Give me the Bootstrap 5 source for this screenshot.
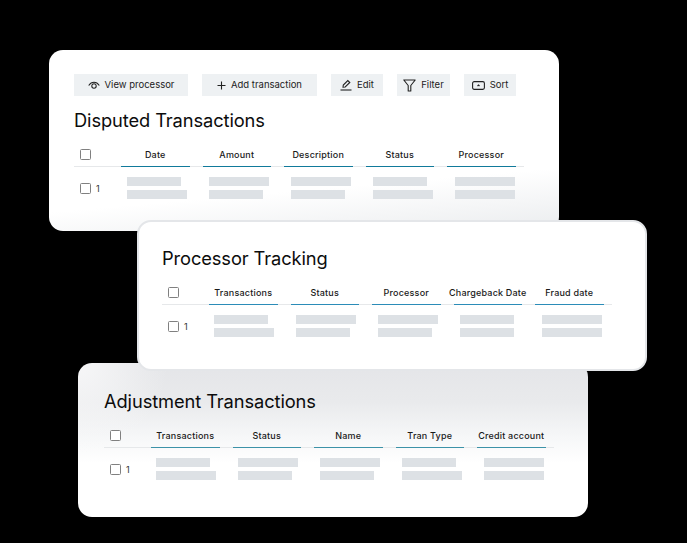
<!DOCTYPE html>
<html lang="en">
<head>
<meta charset="utf-8">
<title>Transactions</title>
<link href="https://cdn.jsdelivr.net/npm/bootstrap@5.3.0/dist/css/bootstrap.min.css" rel="stylesheet">
<style>
html,body{height:100%;margin:0;background:#000;overflow:hidden}
.stage{position:relative;width:687px;height:543px;background:#000;font-family:"Inter","Liberation Sans",sans-serif;color:#111}
.win{position:absolute;width:510px;border-radius:14px;padding-left:25px;padding-right:35px}
.win-a{left:49px;top:50px;height:181px;padding-top:24px;background:linear-gradient(175deg,#fff 0,#fff 72%,#eaecee 100%)}
.win-b{left:137px;top:220px;height:151px;padding-top:24px;background:#fff;border:2px solid #e4e6e9;padding-left:23px;z-index:2}
.win-c{left:78px;top:363px;height:154px;padding-top:26px;padding-left:26px;background:radial-gradient(circle at 0 0,#f7f7f8 0,rgba(247,247,248,0) 90px),linear-gradient(180deg,#e4e5e8 0,#e9eaec 25%,#f6f7f8 48%,#fff 65%);z-index:1}
.tools{gap:14px;height:22px;margin-bottom:12px}
.tool{height:22px;background:#eef1f3;font-size:9.5px;color:#222;gap:5px}
.tool svg{display:block;flex:none}
.tool-label{padding-top:1px}
.win-title{font-size:18.3px;line-height:24px;font-weight:400;margin:0 0 10px;color:#0c0c0c;letter-spacing:-.1px}
.head-row{height:25px;border-bottom:1px solid #e6e8ea;width:450px}
.box{width:11px;height:11px;border:1.5px solid #808080;border-radius:1.5px;flex:none;background:#fff}
.head-box{margin-top:7px}
.col-first{width:47px;padding-left:6px;flex:none}
.heads{gap:13px}
.head-cell{width:68.5px;height:25px;margin-bottom:-1px;border-bottom:1.5px solid #117a9b;font-size:9px;font-weight:500;letter-spacing:.2px;color:#1a1a1a;padding-bottom:5px;white-space:nowrap}
.win-b .head-cell{border-bottom-color:#2b8cb8}
.win-c .head-cell{border-bottom-color:#3c92a8}
.body-row{padding-top:10px}
.num{font-size:9px;line-height:1;margin-left:5px;color:#333}
.first-body{height:22px}
.bars{gap:13.5px}
.bar-cell{width:68.5px;padding-left:6px;gap:4px}
.win-b .bar-cell,.win-c .bar-cell{padding-left:5px}
.bar{height:9px;background:#dde1e5}
.w54{width:54px}.w60{width:60px}
.w114{width:114px}.w115{width:115px}.w52{width:52px}.w53{width:53px}
</style>
</head>
<body>
<div class="stage">
  <section class="win win-a">
    <div class="tools d-flex">
      <div class="tool w114 d-flex align-items-center justify-content-center"><svg width="12" height="9" viewBox="0 0 12 9" fill="none" stroke="#222" stroke-width="1.1"><path d="M.7 4.500C2.200 2.300 3.900 1.300 6 1.300s3.800 1 5.300 3.200"/><path d="M3.800 5a2.200 2.200 0 1 1 4.400 0 2.200 2.200 0 0 1-4.400 0z"/></svg><span class="tool-label">View processor</span></div>
      <div class="tool w115 d-flex align-items-center justify-content-center"><svg width="9" height="9" viewBox="0 0 9 9" fill="none" stroke="#222" stroke-width="1.1"><path d="M4.500.5v8M.5 4.500h8"/></svg><span class="tool-label">Add transaction</span></div>
      <div class="tool w52 d-flex align-items-center justify-content-center"><svg width="12" height="12" viewBox="0 0 12 12" fill="none" stroke="#222" stroke-width="1.1"><path d="M3 8.200 3.300 6 7.800 1.500l2 2L5.200 8z"/><path d="M.5 11h11"/></svg><span class="tool-label">Edit</span></div>
      <div class="tool w53 d-flex align-items-center justify-content-center"><svg width="13" height="13" viewBox="0 0 13 13" fill="none" stroke="#222" stroke-width="1.100"><path d="M.8 1h11.400L7.800 6.500V12H5.200V6.500z" stroke-linejoin="round"/></svg><span class="tool-label">Filter</span></div>
      <div class="tool w52 d-flex align-items-center justify-content-center"><svg width="13" height="9" viewBox="0 0 13 9" fill="none" stroke="#222" stroke-width="1.100"><rect x=".6" y=".6" width="11.800" height="7.800" rx="1.600"/><path d="M5.500 5 6.500 4l1 1"/></svg><span class="tool-label">Sort</span></div>
    </div>
    <h2 class="win-title">Disputed Transactions</h2>
    <div class="head-row d-flex align-items-start">
      <div class="col-first"><div class="box head-box"></div></div>
      <div class="heads d-flex">
        <div class="head-cell d-flex align-items-end justify-content-center">Date</div>
        <div class="head-cell d-flex align-items-end justify-content-center">Amount</div>
        <div class="head-cell d-flex align-items-end justify-content-center">Description</div>
        <div class="head-cell d-flex align-items-end justify-content-center">Status</div>
        <div class="head-cell d-flex align-items-end justify-content-center">Processor</div>
      </div>
    </div>
    <div class="body-row d-flex">
      <div class="col-first first-body d-flex align-items-center"><div class="box"></div><span class="num">1</span></div>
      <div class="bars d-flex">
        <div class="bar-cell d-flex flex-column"><div class="bar w54"></div><div class="bar w60"></div></div>
        <div class="bar-cell d-flex flex-column"><div class="bar w60"></div><div class="bar w54"></div></div>
        <div class="bar-cell d-flex flex-column"><div class="bar w60"></div><div class="bar w54"></div></div>
        <div class="bar-cell d-flex flex-column"><div class="bar w54"></div><div class="bar w60"></div></div>
        <div class="bar-cell d-flex flex-column"><div class="bar w60"></div><div class="bar w60"></div></div>
      </div>
    </div>
  </section>

  <section class="win win-b">
    <h2 class="win-title">Processor Tracking</h2>
    <div class="head-row d-flex align-items-start">
      <div class="col-first"><div class="box head-box"></div></div>
      <div class="heads d-flex">
        <div class="head-cell d-flex align-items-end justify-content-center">Transactions</div>
        <div class="head-cell d-flex align-items-end justify-content-center">Status</div>
        <div class="head-cell d-flex align-items-end justify-content-center">Processor</div>
        <div class="head-cell d-flex align-items-end justify-content-center">Chargeback Date</div>
        <div class="head-cell d-flex align-items-end justify-content-center">Fraud date</div>
      </div>
    </div>
    <div class="body-row d-flex">
      <div class="col-first first-body d-flex align-items-center"><div class="box"></div><span class="num">1</span></div>
      <div class="bars d-flex">
        <div class="bar-cell d-flex flex-column"><div class="bar w54"></div><div class="bar w60"></div></div>
        <div class="bar-cell d-flex flex-column"><div class="bar w60"></div><div class="bar w54"></div></div>
        <div class="bar-cell d-flex flex-column"><div class="bar w60"></div><div class="bar w54"></div></div>
        <div class="bar-cell d-flex flex-column"><div class="bar w54"></div><div class="bar w54"></div></div>
        <div class="bar-cell d-flex flex-column"><div class="bar w60"></div><div class="bar w60"></div></div>
      </div>
    </div>
  </section>

  <section class="win win-c">
    <h2 class="win-title">Adjustment Transactions</h2>
    <div class="head-row d-flex align-items-start">
      <div class="col-first"><div class="box head-box"></div></div>
      <div class="heads d-flex">
        <div class="head-cell d-flex align-items-end justify-content-center">Transactions</div>
        <div class="head-cell d-flex align-items-end justify-content-center">Status</div>
        <div class="head-cell d-flex align-items-end justify-content-center">Name</div>
        <div class="head-cell d-flex align-items-end justify-content-center">Tran Type</div>
        <div class="head-cell d-flex align-items-end justify-content-center">Credit account</div>
      </div>
    </div>
    <div class="body-row d-flex">
      <div class="col-first first-body d-flex align-items-center"><div class="box"></div><span class="num">1</span></div>
      <div class="bars d-flex">
        <div class="bar-cell d-flex flex-column"><div class="bar w54"></div><div class="bar w60"></div></div>
        <div class="bar-cell d-flex flex-column"><div class="bar w60"></div><div class="bar w54"></div></div>
        <div class="bar-cell d-flex flex-column"><div class="bar w60"></div><div class="bar w54"></div></div>
        <div class="bar-cell d-flex flex-column"><div class="bar w54"></div><div class="bar w60"></div></div>
        <div class="bar-cell d-flex flex-column"><div class="bar w60"></div><div class="bar w60"></div></div>
      </div>
    </div>
  </section>
</div>
<script src="https://cdn.jsdelivr.net/npm/bootstrap@5.3.0/dist/js/bootstrap.bundle.min.js"></script>
</body>
</html>
